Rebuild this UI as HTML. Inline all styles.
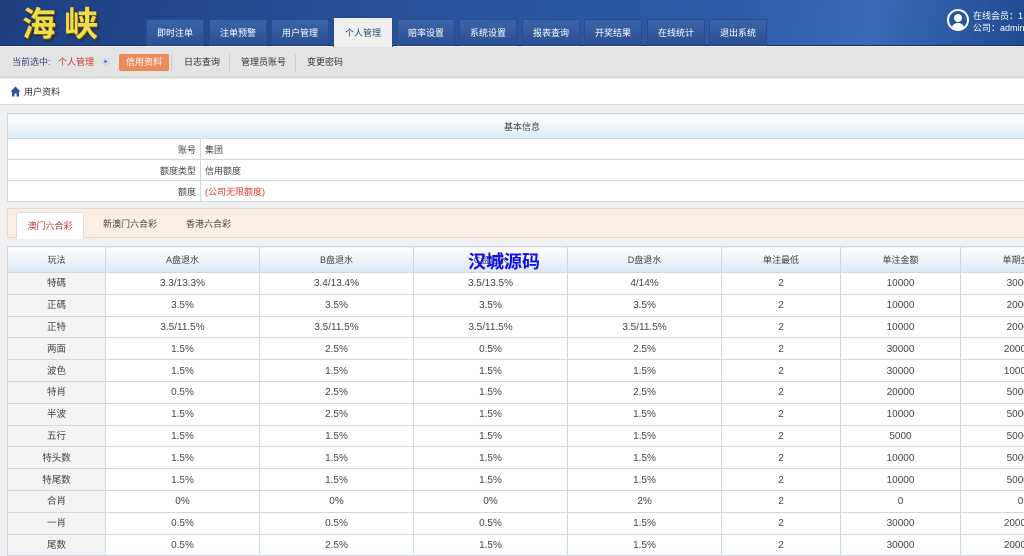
<!DOCTYPE html>
<html><head><meta charset="utf-8"><style>
*{margin:0;padding:0;box-sizing:border-box}
body{width:1024px;height:545px;overflow:hidden;background:#f0f0f0;font-family:"Liberation Sans","Noto Sans CJK SC",sans-serif;font-size:9px;color:#333;position:relative}
.hdr{position:absolute;left:0;top:0;width:1024px;height:46px;background:linear-gradient(100deg,#1e3f82 0%,#2a56a0 50%,#2c5aa6 70%,#3a6ab6 85%,#1f4a92 100%);border-bottom:1px solid #18336a}
.logo{position:absolute;left:22px;top:2px;font-size:34px;font-weight:bold;color:#f2dc4a;letter-spacing:8px;text-shadow:1px 1px 0 #6b5a10,2px 2px 2px #222;font-family:"Noto Sans CJK SC",sans-serif;line-height:40px}
.tab{position:absolute;top:19px;height:27px;width:58px;background:linear-gradient(#3b64a8,#2a4f92);color:#fff;text-align:center;line-height:27px;font-size:9px;border:1px solid #2a4c8a;border-bottom:none}
.tab.on{background:#f0f0f0;color:#2a4a80;top:17px;height:30px;line-height:30px;width:60px}
.user{position:absolute;left:947px;top:9px;width:22px;height:22px;border-radius:50%;border:2px solid #fff;background:#2a56a0;overflow:hidden}
.user:before{content:"";position:absolute;left:5px;top:3px;width:8px;height:8px;border-radius:50%;background:#fff}
.user:after{content:"";position:absolute;left:2px;top:12px;width:14px;height:10px;border-radius:7px 7px 0 0;background:#fff}
.uinfo{position:absolute;left:973px;top:10px;color:#fff;font-size:9px;line-height:12px;white-space:nowrap}
.sub{position:absolute;left:0;top:47px;width:1024px;height:31px;background:#e4e4e4;border-bottom:1px solid #d4d4d4}
.sub span{position:absolute;top:8px;font-size:9px;line-height:14px}
.crumb{position:absolute;left:0;top:79px;width:1024px;height:26px;background:#fff;border-bottom:1px solid #ddd}
table{border-collapse:collapse;table-layout:fixed}
td{border:1px solid #cfd7e4;font-size:9px;color:#444}
.info{position:absolute;left:7px;top:113px;width:1030px;background:#fff}
.info th{height:25px;background:linear-gradient(#fff,#dde9f5);border:1px solid #cfd7e4;font-weight:normal;font-size:9px;color:#444}
.info td{height:21px}
.info td.l{text-align:right;padding-right:4px}
.info td.r{padding-left:4px}
.tabs{position:absolute;left:7px;top:208px;width:1030px;height:30px;background:#fbeee4;border:1px solid #ead8c8}
.tabs span{position:absolute;top:0;line-height:30px;font-size:9px;color:#444}
.tabs .act{left:8px;top:3px;width:68px;height:27px;line-height:27px;background:#fff;border:1px solid #ddd;border-bottom:none;border-radius:3px 3px 0 0;text-align:center;color:#c0392b}
.data{position:absolute;left:7px;top:246px;width:1073px;background:#fff}
.data th{height:26px;background:linear-gradient(#fff,#dbe7f3);border:1px solid #cfd7e4;font-weight:normal;font-size:9px;color:#444}
.data td{height:21.8px;line-height:12px;padding:2px 0 0;text-align:center;font-size:10px;vertical-align:middle}
.data td:first-child{background:#f3f3f3;font-size:9.5px}
.wm{position:absolute;left:468px;top:250px;font-size:18px;font-weight:bold;color:#1010e8;font-family:"Noto Sans CJK SC",sans-serif;line-height:22px}
</style></head><body>
<div class="hdr">
<div class="logo">海峡</div>
<div class="tab" style="left:146px">即时注单</div>
<div class="tab" style="left:209px">注单预警</div>
<div class="tab" style="left:271px">用户管理</div>
<div class="tab on" style="left:333px">个人管理</div>
<div class="tab" style="left:397px">赔率设置</div>
<div class="tab" style="left:459px">系统设置</div>
<div class="tab" style="left:522px">报表查询</div>
<div class="tab" style="left:584px">开奖结果</div>
<div class="tab" style="left:647px">在线统计</div>
<div class="tab" style="left:709px">退出系统</div>
<div class="user"></div>
<div class="uinfo">在线会员：1<br>公司：admin</div>
</div>
<div class="sub">
<span style="left:12px;color:#2a4a80">当前选中:</span>
<span style="left:58px;color:#d03a2a">个人管理</span>
<span style="left:102px;top:11px;width:8px;height:8px;border-radius:50%;background:#cfdcf0;color:#2a56a0;font-size:6px;line-height:8px;text-align:center">▸</span>
<span style="left:119px;top:7px;height:17px;width:50px;background:#ec8c5c;color:#fff;text-align:center;line-height:17px;border-radius:2px">信用资料</span>
<span style="left:171px;top:7px;height:17px;border-left:1px solid #ccc"></span>
<span style="left:184px">日志查询</span>
<span style="left:229px;top:7px;height:17px;border-left:1px solid #ccc"></span>
<span style="left:241px">管理员账号</span>
<span style="left:295px;top:7px;height:17px;border-left:1px solid #ccc"></span>
<span style="left:307px">变更密码</span>
</div>
<div class="crumb">
<svg style="position:absolute;left:10px;top:7px" width="11" height="11" viewBox="0 0 11 11"><path d="M5.5 0.5L0.5 5.5H2V10.5H4.5V7.5H6.5V10.5H9V5.5H10.5Z" fill="#2a56a0"/></svg>
<span style="position:absolute;left:24px;top:6px;font-size:9px;line-height:14px">用户资料</span>
</div>
<table class="info">
<colgroup><col style="width:193px"><col></colgroup>
<tr><th colspan="2">基本信息</th></tr>
<tr><td class="l">账号</td><td class="r">集团</td></tr>
<tr><td class="l">额度类型</td><td class="r">信用额度</td></tr>
<tr><td class="l">额度</td><td class="r" style="color:#e03a2a">(公司无限额度)</td></tr>
</table>
<div class="tabs">
<span class="act">澳门六合彩</span>
<span style="left:95px">新澳门六合彩</span>
<span style="left:178px">香港六合彩</span>
</div>
<table class="data">
<colgroup><col style="width:98px"><col style="width:154px"><col style="width:154px"><col style="width:154px"><col style="width:154px"><col style="width:119px"><col style="width:120px"><col style="width:120px"></colgroup>
<tr><th>玩法</th><th>A盘退水</th><th>B盘退水</th><th>C盘退水</th><th>D盘退水</th><th>单注最低</th><th>单注金额</th><th>单期金额</th></tr>
<tr><td>特碼</td><td>3.3/13.3%</td><td>3.4/13.4%</td><td>3.5/13.5%</td><td>4/14%</td><td>2</td><td>10000</td><td>30000</td></tr>
<tr><td>正碼</td><td>3.5%</td><td>3.5%</td><td>3.5%</td><td>3.5%</td><td>2</td><td>10000</td><td>20000</td></tr>
<tr><td>正特</td><td>3.5/11.5%</td><td>3.5/11.5%</td><td>3.5/11.5%</td><td>3.5/11.5%</td><td>2</td><td>10000</td><td>20000</td></tr>
<tr><td>两面</td><td>1.5%</td><td>2.5%</td><td>0.5%</td><td>2.5%</td><td>2</td><td>30000</td><td>200000</td></tr>
<tr><td>波色</td><td>1.5%</td><td>1.5%</td><td>1.5%</td><td>1.5%</td><td>2</td><td>30000</td><td>100000</td></tr>
<tr><td>特肖</td><td>0.5%</td><td>2.5%</td><td>1.5%</td><td>2.5%</td><td>2</td><td>20000</td><td>50000</td></tr>
<tr><td>半波</td><td>1.5%</td><td>2.5%</td><td>1.5%</td><td>1.5%</td><td>2</td><td>10000</td><td>50000</td></tr>
<tr><td>五行</td><td>1.5%</td><td>1.5%</td><td>1.5%</td><td>1.5%</td><td>2</td><td>5000</td><td>50000</td></tr>
<tr><td>特头数</td><td>1.5%</td><td>1.5%</td><td>1.5%</td><td>1.5%</td><td>2</td><td>10000</td><td>50000</td></tr>
<tr><td>特尾数</td><td>1.5%</td><td>1.5%</td><td>1.5%</td><td>1.5%</td><td>2</td><td>10000</td><td>50000</td></tr>
<tr><td>合肖</td><td>0%</td><td>0%</td><td>0%</td><td>2%</td><td>2</td><td>0</td><td>0</td></tr>
<tr><td>一肖</td><td>0.5%</td><td>0.5%</td><td>0.5%</td><td>1.5%</td><td>2</td><td>30000</td><td>200000</td></tr>
<tr><td>尾数</td><td>0.5%</td><td>2.5%</td><td>1.5%</td><td>1.5%</td><td>2</td><td>30000</td><td>200000</td></tr>
</table>
<div class="wm">汉城源码</div>
</body></html>
